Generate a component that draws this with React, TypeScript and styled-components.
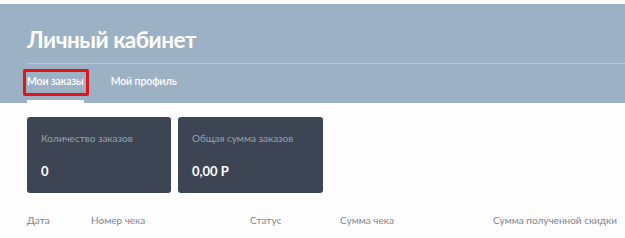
import React from "react";
import styled, { createGlobalStyle } from "styled-components";

const Global = createGlobalStyle`
  html, body { margin: 0; padding: 0; background: #fdfdfd; }
  body { font-family: "Lato", "Noto Sans", "Open Sans", sans-serif; }
  * { box-sizing: border-box; }
`;

const Page = styled.div`
  width: 625px;
  height: 238px;
  overflow: hidden;
  padding-top: 4px;
`;

const Header = styled.header`
  background: #9db1c5;
  padding: 22px 0 0 27px;
`;

const Title = styled.h1`
  margin: 0 0 10px;
  font-size: 22.5px;
  line-height: 27px;
  font-weight: 700;
  color: #ffffff;
  letter-spacing: -0.5px;
`;

const Divider = styled.div`
  height: 1px;
  background: #b9c8d7;
`;

const Tabs = styled.nav`
  display: flex;
  gap: 27px;
`;

const Tab = styled.div<{ $active?: boolean }>`
  position: relative;
  padding: 10px 0 12px;
  font-size: 10.5px;
  line-height: 14px;
  font-weight: 600;
  color: #ffffff;
  letter-spacing: -0.1px;
  border-bottom: 3px solid ${(p) => (p.$active ? "#fdfdfd" : "transparent")};
`;

const Highlight = styled.span`
  position: absolute;
  left: -4px;
  top: 5px;
  width: 66px;
  height: 27px;
  border: 3px solid #e5121a;
  border-radius: 2px;
`;

const Body = styled.main`
  padding: 14px 0 0 27px;
`;

const Cards = styled.div`
  display: flex;
  gap: 7px;
`;

const Card = styled.div<{ $w: number }>`
  width: ${(p) => p.$w}px;
  height: 76px;
  background: #3d4555;
  border-radius: 3px;
  padding: 15px 14px 0;
  display: flex;
  flex-direction: column;
`;

const CardLabel = styled.div`
  font-size: 10px;
  line-height: 12px;
  color: #98a1ae;
`;

const CardValue = styled.div`
  margin-top: 19px;
  font-size: 13px;
  line-height: 16px;
  font-weight: 700;
  color: #ffffff;
`;

const TableHead = styled.div`
  display: grid;
  grid-template-columns: 64px 159px 90px 153px 1fr;
  margin-top: 21px;
  font-size: 10px;
  line-height: 13px;
  color: #80868f;
`;

export default function App() {
  return (
    <>
      <Global />
      <Page>
        <Header>
          <Title>Личный кабинет</Title>
          <Divider />
          <Tabs>
            <Tab $active>
              Мои заказы
              <Highlight />
            </Tab>
            <Tab>Мой профиль</Tab>
          </Tabs>
        </Header>
        <Body>
          <Cards>
            <Card $w={144}>
              <CardLabel>Количество заказов</CardLabel>
              <CardValue>0</CardValue>
            </Card>
            <Card $w={145}>
              <CardLabel>Общая сумма заказов</CardLabel>
              <CardValue>0,00 Р</CardValue>
            </Card>
          </Cards>
          <TableHead>
            <span>Дата</span>
            <span>Номер чека</span>
            <span>Статус</span>
            <span>Сумма чека</span>
            <span>Сумма полученной скидки</span>
          </TableHead>
        </Body>
      </Page>
    </>
  );
}
